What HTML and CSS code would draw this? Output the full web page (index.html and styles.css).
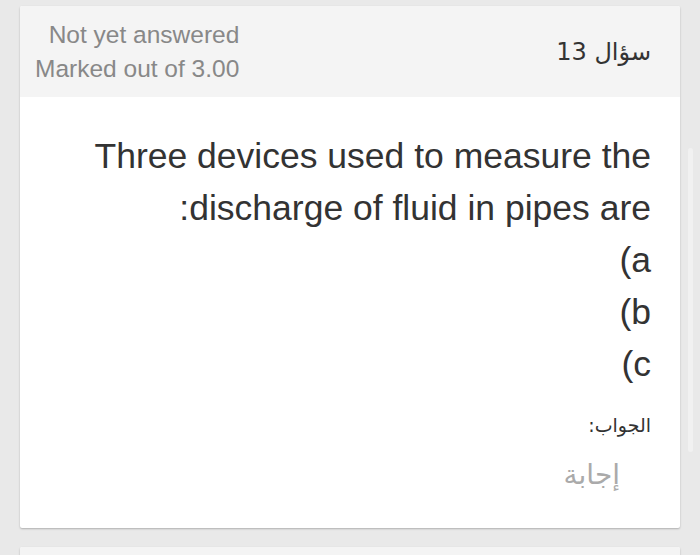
FILE: index.html
```html
<!DOCTYPE html>
<html lang="ar" dir="rtl">
<head>
<meta charset="utf-8">
<title>سؤال 13</title>
<link rel="stylesheet" href="styles.css">
</head>
<body>
<div class="page">
  <section class="card">
    <header class="card-head">
      <h3 class="qno">سؤال 13</h3>
      <div class="state" dir="ltr">
        <div>Not yet answered</div>
        <div>Marked out of 3.00</div>
      </div>
    </header>
    <div class="card-body">
      <div class="qtext" dir="ltr">
        <div class="line">Three devices used to measure the</div>
        <div class="line">:discharge of fluid in pipes are</div>
        <div class="line">(a</div>
        <div class="line">(b</div>
        <div class="line">(c</div>
      </div>
      <div class="answer">
        <label class="answer-label">الجواب:</label>
        <div class="answer-input">إجابة</div>
      </div>
    </div>
  </section>
  <section class="card next">
    <header class="card-head short"></header>
  </section>
</div>
<div class="scroll-thumb"></div>
</body>
</html>
```

FILE: styles.css
```css
html, body {
  margin: 0;
  padding: 0;
  height: 100%;
  overflow: hidden;
}
body {
  background: #e9e9e9;
  font-family: "Liberation Sans", Arial, "DejaVu Sans", sans-serif;
  color: #333;
  position: relative;
}
.page {
  padding: 6px 20px 0 20px;
  display: flex;
  flex-direction: column;
  gap: 19px;
}
.card {
  background: #fff;
  box-shadow: 0 1px 2px rgba(0,0,0,0.25);
  border-radius: 2px;
  overflow: hidden;
}
.card-head {
  background: #f4f4f4;
  height: 91px;
  display: flex;
  align-items: center;
  justify-content: space-between;
  padding: 0 29px 0 15px;
}
.card-head.short {
  height: 20px;
}
.qno {
  margin: 0;
  font-family: "DejaVu Sans", sans-serif;
  font-weight: normal;
  font-size: 24px;
  color: #333;
}
.state {
  display: flex;
  flex-direction: column;
  align-items: flex-end;
  font-size: 24.5px;
  line-height: 34px;
  color: #888;
  margin-top: 1px;
}
.card-body {
  padding: 33px 29px 36px 29px;
}
.qtext {
  font-size: 35.5px;
  line-height: 52px;
  color: #333;
  text-align: right;
}
.line {
  white-space: nowrap;
}
.answer {
  margin-top: 22px;
  display: flex;
  flex-direction: column;
  align-items: flex-start;
}
.answer-label {
  font-family: "DejaVu Sans", sans-serif;
  font-size: 19px;
  line-height: 26px;
  color: #333;
}
.answer-input {
  margin-top: 20px;
  margin-right: 31px;
  font-family: "DejaVu Sans", sans-serif;
  font-size: 28px;
  line-height: 34px;
  color: #aaa;
}
.scroll-thumb {
  position: absolute;
  left: 688px;
  top: 148px;
  width: 5px;
  height: 304px;
  border-radius: 3px;
  background: #f1f1f1;
}
```
